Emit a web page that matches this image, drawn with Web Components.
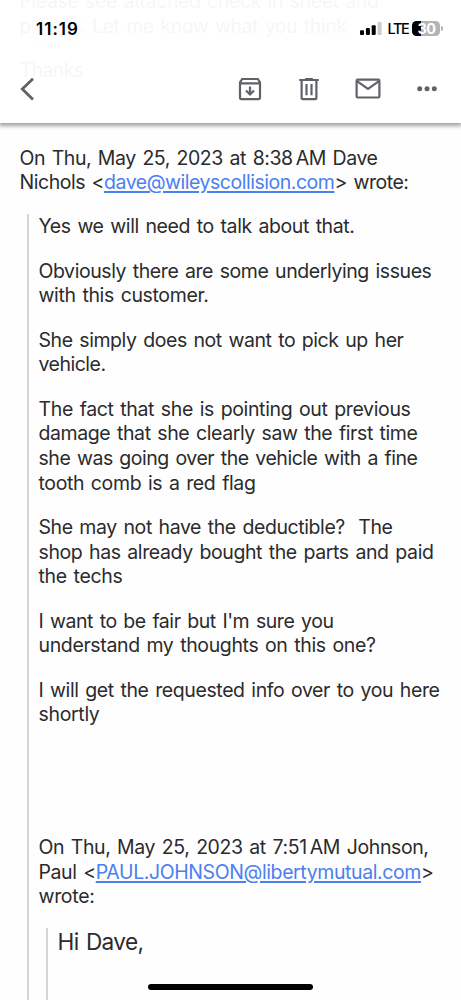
<!DOCTYPE html>
<html lang="en">
<head>
<meta charset="utf-8">
<title>Mail</title>
<style>
  html, body {
    margin: 0;
    height: 1000px;
    overflow: hidden;
    background: #fefefe;
    font-family: Inter, "Liberation Sans", sans-serif;
  }
</style>
</head>
<body>
<mail-screen>
  <mail-header slot="header"></mail-header>

  <mail-text>
    <text-line w="359">Please see attached check in sheet and</text-line>
    <text-line w="327">photos. Let me know what you think</text-line>
  </mail-text>
  <mail-text>
    <text-line w="64">Thanks</text-line>
  </mail-text>
  <mail-text style="margin-top: 43.7px">
    <text-line w="358">On Thu, May 25, 2023 at 8:38&#x202f;AM Dave</text-line>
    <text-line w="389">Nichols &lt;<mail-link>dave@wileyscollision.com</mail-link>&gt; wrote:</text-line>
  </mail-text>

  <mail-quote>
    <mail-text>
      <text-line w="316">Yes we will need to talk about that.</text-line>
    </mail-text>
    <mail-text>
      <text-line w="393">Obviously there are some underlying issues</text-line>
      <text-line w="170">with this customer.</text-line>
    </mail-text>
    <mail-text>
      <text-line w="365">She simply does not want to pick up her</text-line>
      <text-line w="67">vehicle.</text-line>
    </mail-text>
    <mail-text>
      <text-line w="372">The fact that she is pointing out previous</text-line>
      <text-line w="379">damage that she clearly saw the first time</text-line>
      <text-line w="379">she was going over the vehicle with a fine</text-line>
      <text-line w="217">tooth comb is a red flag</text-line>
    </mail-text>
    <mail-text>
      <text-line w="354">She may not have the deductible?&nbsp; The</text-line>
      <text-line w="395">shop has already bought the parts and paid</text-line>
      <text-line w="84">the techs</text-line>
    </mail-text>
    <mail-text>
      <text-line w="295">I want to be fair but I'm sure you</text-line>
      <text-line w="337">understand my thoughts on this one?</text-line>
    </mail-text>
    <mail-text>
      <text-line w="401">I will get the requested info over to you here</text-line>
      <text-line w="61">shortly</text-line>
    </mail-text>
    <mail-text style="margin-top: 88.6px">
      <text-line w="390">On Thu, May 25, 2023 at 7:51&#x202f;AM Johnson,</text-line>
      <text-line w="395">Paul &lt;<mail-link>PAUL.JOHNSON@libertymutual.com</mail-link>&gt;</text-line>
      <text-line w="56">wrote:</text-line>
    </mail-text>
    <mail-quote style="--size: 22.6px; --leading: 28.4px; margin-top: -.6px">
      <mail-text>
        <text-line w="86">Hi Dave,</text-line>
      </mail-text>
    </mail-quote>
  </mail-quote>
</mail-screen>

<script>
function attach(el, html) {
  el.attachShadow({mode: 'open'});
  el.shadowRoot.innerHTML = html;
}

class MailScreen extends HTMLElement {
  constructor() {
    super();
    attach(this, `
<style>
  :host {
    display: block;
    position: relative;
    height: 1000px;
    overflow: hidden;
    --size: 19.5px;
    --leading: 24.6px;
  }
  .overlay {
    position: absolute;
    top: 0;
    left: 0;
    right: 0;
  }
  .message {
    display: flex;
    flex-direction: column;
    gap: 19.6px;
    padding-left: 20px;
    margin-top: -11px;
    height: 1011px;
  }
  .home {
    position: absolute;
    left: 148px;
    bottom: 10px;
    width: 165px;
    height: 6px;
    border-radius: 3px;
    background: #000;
  }
</style>
<div class="message"><slot></slot></div>
<div class="overlay"><slot name="header"></slot></div>
<div class="home"></div>`);
  }
}

class MailHeader extends HTMLElement {
  constructor() {
    super();
    attach(this, `
<style>
  :host {
    display: flex;
    flex-direction: column;
    height: 123px;
    background: rgba(255, 255, 255, .955);
    box-shadow: 0 2px 4px 1px rgba(0, 0, 0, .36);
  }
</style>
<status-bar></status-bar>
<mail-toolbar></mail-toolbar>`);
  }
}

class StatusBar extends HTMLElement {
  constructor() {
    super();
    attach(this, `
<style>
  :host {
    display: flex;
    align-items: center;
    height: 57px;
    padding: 0 18px 0 33px;
    color: #000;
  }
  .clock {
    padding: 0 3px;
    background: #fefefe;
    font-size: 17px;
    font-weight: 600;
    line-height: 28px;
  }
  .right {
    display: flex;
    align-items: center;
    margin-left: auto;
  }
  .lte {
    width: 21px;
    margin: 0 4px 0 5px;
    font-size: 14.5px;
    font-weight: 500;
  }
  .battery {
    display: flex;
    align-items: center;
    gap: 1px;
  }
  .cell {
    width: 28px;
    height: 15px;
    border-radius: 4.5px;
    background: linear-gradient(90deg, #000 9px, #b4b4b4 9px);
    color: #fff;
    font-size: 14.5px;
    font-weight: 700;
    line-height: 15px;
    text-align: center;
    letter-spacing: -.7px;
  }
  .nub {
    width: 1.6px;
    height: 5px;
    border-radius: 0 2px 2px 0;
    background: #b4b4b4;
  }
  svg { display: block; }
</style>
<text-line class="clock" w="43">11:19</text-line>
<div class="right">
  <svg width="22" height="13" viewBox="0 0 22 13">
    <rect x="0" y="8.3" width="4" height="4.7" rx="1"/>
    <rect x="5.9" y="6" width="4" height="7" rx="1"/>
    <rect x="11.7" y="3.2" width="4" height="9.8" rx="1"/>
    <rect x="17.6" y="0" width="4" height="13" rx="1" fill="#ccc"/>
  </svg>
  <text-line class="lte" w="21">LTE</text-line>
  <div class="battery"><div class="cell">30</div><div class="nub"></div></div>
</div>`);
  }
}

class MailToolbar extends HTMLElement {
  constructor() {
    super();
    attach(this, `
<style>
  :host {
    display: flex;
    align-items: center;
    height: 63px;
    padding: 0 19.5px 0 12px;
  }
  .actions {
    display: flex;
    gap: 29px;
    margin-left: auto;
  }
  svg {
    display: block;
    fill: none;
    stroke: #5f6368;
    stroke-width: 2.2;
  }
</style>
<svg width="30" height="30" viewBox="0 0 30 30"><path d="M21 4.8 10.3 15 21 25.6" stroke-width="2.8"/></svg>
<div class="actions">
  <svg width="30" height="30" viewBox="0 0 30 30">
    <path d="M5 8.4 7.2 5h15.6L25 8.4v15.4q0 1.3-1.3 1.3H6.3Q5 25.1 5 23.8zM5 9.3h20"/>
    <path d="M15 12.5v7.5M11 16.5l4 4 4-4"/>
  </svg>
  <svg width="30" height="30" viewBox="0 0 30 30">
    <path d="M5.2 6h19.6M11.2 5h7.6M7.6 6.5v17.3q0 1.4 1.4 1.4h12q1.4 0 1.4-1.4V6.5M12.5 10v11.2M17.5 10v11.2"/>
  </svg>
  <svg width="30" height="30" viewBox="0 0 30 30">
    <rect x="3.6" y="5.7" width="22.8" height="17.8" rx="1.2"/>
    <path d="M4 7.2l11 7.7 11-7.7"/>
  </svg>
  <svg width="30" height="30" viewBox="0 0 30 30">
    <g fill="#5f6368" stroke="none">
      <circle cx="7.7" cy="14.7" r="2.5"/>
      <circle cx="15" cy="14.7" r="2.5"/>
      <circle cx="22.3" cy="14.7" r="2.5"/>
    </g>
  </svg>
</div>`);
  }
}

class MailText extends HTMLElement {
  constructor() {
    super();
    attach(this, `
<style>
  :host {
    display: flex;
    flex-direction: column;
    margin-left: -.5px;
    color: #2b2b2d;
    font-size: var(--size);
    line-height: var(--leading);
    word-spacing: 1.6px;
  }
</style>
<slot></slot>`);
  }
}

class MailQuote extends HTMLElement {
  constructor() {
    super();
    attach(this, `
<style>
  :host {
    display: flex;
    flex-direction: column;
    flex: 1 0 auto;
    gap: 19.8px;
    margin-left: 7px;
    padding-left: 10px;
    border-left: 2px solid #d6d6d6;
  }
</style>
<slot></slot>`);
  }
}

class MailLink extends HTMLElement {
  constructor() {
    super();
    // inline element: any whitespace around the slot would be drawn
    attach(this, `<style>
  :host {
    color: #4a80f0;
    text-decoration: underline;
    text-decoration-thickness: 1.5px;
    text-underline-offset: 2px;
  }
</style><slot></slot>`);
  }
}

// one line of text, tracked so that it fills the width in "w"
class TextLine extends HTMLElement {
  constructor() {
    super();
    attach(this, `
<style>
  :host {
    display: block;
    white-space: nowrap;
  }
</style>
<span><slot></slot></span>`);
  }

  connectedCallback() {
    const $span = this.shadowRoot.querySelector('span');
    const width = Number(this.getAttribute('w'));
    const gap = width - $span.getBoundingClientRect().width;
    $span.style.letterSpacing = gap / this.textContent.length + 'px';
  }
}

window.customElements.define('mail-screen', MailScreen);
window.customElements.define('mail-header', MailHeader);
window.customElements.define('status-bar', StatusBar);
window.customElements.define('mail-toolbar', MailToolbar);
window.customElements.define('mail-text', MailText);
window.customElements.define('mail-quote', MailQuote);
window.customElements.define('mail-link', MailLink);
window.customElements.define('text-line', TextLine);
</script>
</body>
</html>
